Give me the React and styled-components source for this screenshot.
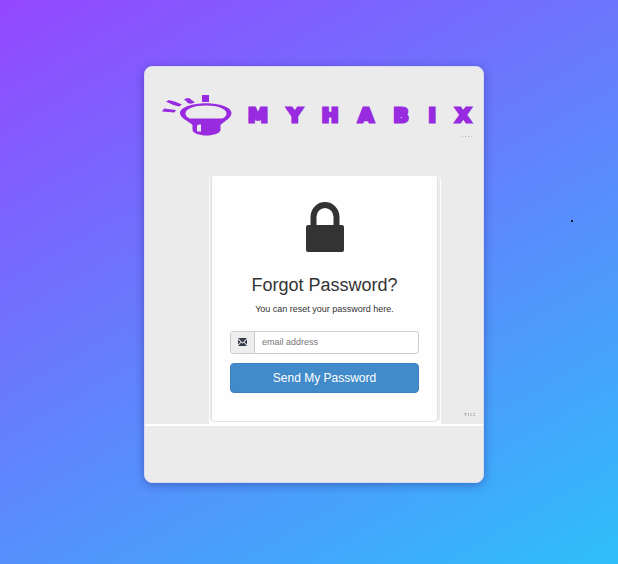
import React from "react";
import styled, { createGlobalStyle } from "styled-components";

const GlobalStyle = createGlobalStyle`
  *, *::before, *::after { box-sizing: border-box; }
  body {
    margin: 0;
    color: #333;
    font-family: "Liberation Sans", Arial, sans-serif;
  }
`;

const Page = styled.div`
  position: relative;
  display: flex;
  align-items: center;
  justify-content: center;
  min-height: 100vh;
  padding: 16px 0 32px 10px;
  background: linear-gradient(150deg, #9447ff 0%, #2ebffa 100%);
`;

const Speck = styled.span`
  position: absolute;
  top: 39%;
  right: 45px;
  width: 2px;
  height: 2px;
  background: #0a1440;
`;

const Card = styled.main`
  width: 100%;
  max-width: 340px;
  overflow: hidden;
  border: 1px solid #d9dcf4;
  border-radius: 8px;
  background: #ebebeb;
  box-shadow: 0 2px 10px rgba(30, 30, 110, 0.4);
`;

const Header = styled.header`
  display: flex;
  align-items: center;
  gap: 16px;
  padding: 28px 12px 0 17px;
`;

const LogoMark = styled.svg`
  flex: none;
  width: 70px;
  height: 41px;
`;

const Wordmark = styled.h1`
  display: flex;
  flex: 1;
  justify-content: space-between;
  margin: 0;
  color: #982bdf;
  font: 700 20px/24px "DejaVu Sans", sans-serif;
  -webkit-text-stroke: 3px #982bdf;
`;

const Marks = styled.svg`
  display: block;
  width: 12px;
  height: 4px;
  margin-left: auto;
`;

const HeaderNote = styled.div`
  height: 40px;
  padding-right: 10px;
`;

const Body = styled.section`
  display: grid;
  grid-template-columns: 64px minmax(0, 1fr) 42px;
  align-items: end;
  border-bottom: 2px solid #fff;
`;

const Frame = styled.div`
  grid-column: 2;
  padding: 0 2px 2px 1px;
  border: 1px solid #fdfdfd;
  border-width: 0 1px;
  border-radius: 4px 4px 0 0;
  background: linear-gradient(#ebebeb, #ebebeb) top / 100% calc(100% - 4px) no-repeat #fff;
`;

const Panel = styled.form`
  display: flex;
  flex-direction: column;
  align-items: center;
  padding: 26px 18px 28px;
  border: 1px solid #e2e2e2;
  border-top: 0;
  border-radius: 0 0 4px 4px;
  background: #fefefe;
`;

const LockIcon = styled.svg`
  width: 38px;
  height: 50px;
`;

const Title = styled.h2`
  margin: 20px 0 0;
  font-size: 18px;
  font-weight: 400;
  line-height: 26px;
`;

const Hint = styled.p`
  margin: 5px 0 16px;
  font-size: 9px;
  line-height: 12px;
`;

const Field = styled.div`
  display: flex;
  width: 100%;
  height: 23px;
  overflow: hidden;
  border: 1px solid #ccc;
  border-radius: 3px;
  background: #fff;
`;

const FieldIcon = styled.label`
  display: flex;
  align-items: center;
  justify-content: center;
  width: 24px;
  border-right: 1px solid #ccc;
  background: #eee;
`;

const EmailInput = styled.input`
  flex: 1;
  min-width: 0;
  padding: 0 7px;
  border: 0;
  background: transparent;
  color: #555;
  font: 9px "Liberation Sans", Arial, sans-serif;

  &::placeholder { color: #777; opacity: 1; }
`;

const Submit = styled.button`
  width: 100%;
  height: 30px;
  margin-top: 9px;
  padding: 0;
  border: 1px solid #3c82c0;
  border-radius: 4px;
  background: #428bca;
  color: #fff;
  font: 12px "Liberation Sans", Arial, sans-serif;
  cursor: pointer;
`;

const SideNote = styled.div`
  padding: 0 8px 7px 0;
`;

const Footer = styled.footer`
  height: 56px;
`;

function Logo() {
  return (
    <LogoMark viewBox="0 0 70 41" fill="#982bdf" aria-hidden="true">
      <path d="M40 0h7v7h-7z" />
      <path d="M22 5q1-2 5-2l6 4.500-4 1.200q-4 0-5-3zM4 6.500l3-1.500q6 1 13 4.500l-3 2q-6-1-10-3.500zM0 16.500l2-3 12 1.500-1.500 2.500z" />
      <path
        fillRule="evenodd"
        d="M44 8.300c14 0 25.500 4.200 25.500 9.700 0 5-7 8-11 12v5c0 3-7 5.500-14 5.500s-14-2.500-14-5.500v-5c-4-4-12.500-7-12.500-12 0-5.500 12-9.700 26-9.700zM44 10.500c-12 0-20.500 3.500-20.500 8 0 2 1.500 3.700 4 5h33c2.500-1.300 4-3 4-5 0-4.500-8.500-8-20.500-8zM37 29.500q-2 0-2 2v5h4v-7z"
      />
    </LogoMark>
  );
}

function Lock() {
  return (
    <LockIcon viewBox="0 0 38 50" aria-hidden="true">
      <path d="M7.500 27V15a11.500 12 0 0 1 23 0v12" fill="none" stroke="#333" strokeWidth="6" />
      <rect y="23" width="38" height="27" rx="2" fill="#333" />
    </LockIcon>
  );
}

function Envelope() {
  return (
    <svg width="9" height="8" viewBox="0 0 9 8" role="img" aria-label="Email">
      <path d="M0 0h9L4.500 4.500zM0 1.500L2.700 4 0 6.500zM9 1.500L6.300 4 9 6.500zM0 8l3.300-3.500 1.200 1.200 1.200-1.200L9 8z" fill="#343c4c" />
    </svg>
  );
}

export default function App() {
  return (
    <>
      <GlobalStyle />
      <Page>
        <Speck />
        <Card>
          <Header>
            <Logo />
            <Wordmark aria-label="MYHABIX">
              {[..."MYHABIX"].map((letter) => (
                <span key={letter}>{letter}</span>
              ))}
            </Wordmark>
          </Header>
          <HeaderNote>
            <Marks viewBox="0 0 12 4" aria-hidden="true">
              <path d="M1 0h1M4 0h1M7 0h1M10 0h1" stroke="#bbb" strokeWidth="2" />
            </Marks>
          </HeaderNote>
          <Body>
            <Frame>
              <Panel onSubmit={(event) => event.preventDefault()}>
                <Lock />
                <Title>Forgot Password?</Title>
                <Hint>You can reset your password here.</Hint>
                <Field>
                  <FieldIcon htmlFor="email"><Envelope /></FieldIcon>
                  <EmailInput id="email" type="email" placeholder="email address" />
                </Field>
                <Submit type="submit">Send My Password</Submit>
              </Panel>
            </Frame>
            <SideNote>
              <Marks viewBox="0 0 12 4" aria-hidden="true">
                <path d="M1 .5h3M2.500 0v3M5.500 0v3M8 0v3M10 .5h2M10 2.500h2" stroke="#b5b5b5" fill="none" />
              </Marks>
            </SideNote>
          </Body>
          <Footer />
        </Card>
      </Page>
    </>
  );
}
